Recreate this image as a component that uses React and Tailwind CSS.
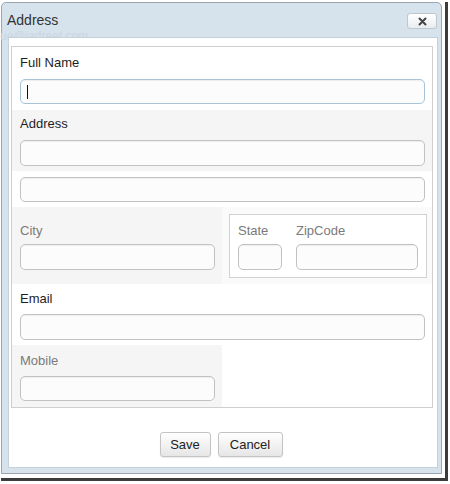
import React from 'react';

const font = { fontFamily: '"Liberation Sans", Arial, sans-serif' };

function Field({ className = '', focused = false }) {
  return (
    <div
      className={`rounded-[5px] border bg-[#fcfcfc] shadow-[inset_0_1px_1px_rgba(0,0,0,0.06)] ${
        focused ? 'border-[#a6c4d8]' : 'border-[#c2c2c2]'
      } flex items-center ${className}`}
    >
      {focused && <span className="ml-[6px] block h-[14px] w-px bg-[#111]" />}
    </div>
  );
}

function Label({ children, muted = false, className = '' }) {
  return (
    <div className={`h-[16px] text-[13px] leading-[16px] ${muted ? 'text-[#7a7a7a]' : 'text-[#1e1e1e]'} ${className}`}>
      {children}
    </div>
  );
}

function Btn({ children, className = '' }) {
  return (
    <button className={`h-[25px] rounded-[3px] border border-[#c4c4c4] bg-gradient-to-b from-white to-[#e6e6e6] text-[13px] text-[#222] shadow-[0_1px_1px_rgba(0,0,0,0.08)] ${className}`}>
      {children}
    </button>
  );
}

export default function App() {
  return (
    <div className="w-[450px] h-[484px] bg-white pt-[2px] pl-[1px]" style={font}>
      {/* drop shadow wrapper */}
      <div className="w-[447px] pr-[3px] pb-[4px] border-r-[3px] border-b-[3px] border-[#3c3c3c]">
        <div className="relative w-[441px] h-[472px] rounded-t-[5px] border border-[#9ba6b0] bg-[#d6e2ec] flex flex-col">
          {/* Title bar */}
          <div className="h-[34px] flex items-start justify-between pl-[5px] pr-[4px]">
            <span className="mt-[10px] text-[14px] leading-[14px] text-[#333]">Address</span>
            <button className="mt-[10px] w-[30px] h-[16px] rounded-[3px] border border-[#bfc6cc] bg-gradient-to-b from-white to-[#e9edf0] flex items-center justify-center">
              <svg width="9" height="9" viewBox="0 0 9 9">
                <path d="M1.5 1.5 L7.5 7.5 M7.5 1.5 L1.5 7.5" stroke="#444" strokeWidth="2" strokeLinecap="round" />
              </svg>
            </button>
          </div>
          <span className="absolute left-[-2px] top-[29px] text-[12px] leading-[8px] text-[#cad7e2] pointer-events-none">
            ue@iadreet.com
          </span>

          {/* Content */}
          <div className="relative ml-[6px] mr-[3px] h-[431px] border border-[#c3d1dd] bg-white pl-[2px] pt-[8px]">
            <div className="w-[422px] border border-[#cfcfcf] flex flex-col">
              {/* Full name */}
              <div className="h-[63px] px-[8px] pt-[8px]">
                <Label>Full Name</Label>
                <Field focused className="mt-[8px] h-[25px] w-[405px]" />
              </div>
              {/* Address */}
              <div className="h-[61px] bg-[#f5f5f5] px-[8px] pt-[6px]">
                <Label>Address</Label>
                <Field className="mt-[8px] h-[26px] w-[405px]" />
              </div>
              <div className="h-[36px] px-[8px] pt-[6px]">
                <Field className="h-[25px] w-[405px]" />
              </div>
              {/* City / State / Zip */}
              <div className="h-[77px] flex">
                <div className="w-[210px] bg-[#f5f5f5] px-[8px] pt-[16px]">
                  <Label muted>City</Label>
                  <Field className="mt-[5px] h-[26px] w-[195px]" />
                </div>
                <div className="flex-1 bg-[#fafafa] pl-[7px] pr-[5px] pt-[7px]">
                  <div className="h-[64px] border border-[#d2d2d2] bg-white flex gap-[14px] pl-[8px] pt-[8px]">
                    <div>
                      <Label muted>State</Label>
                      <Field className="mt-[5px] h-[26px] w-[44px]" />
                    </div>
                    <div>
                      <Label muted>ZipCode</Label>
                      <Field className="mt-[5px] h-[26px] w-[122px]" />
                    </div>
                  </div>
                </div>
              </div>
              {/* Email */}
              <div className="h-[61px] px-[8px] pt-[7px]">
                <Label>Email</Label>
                <Field className="mt-[7px] h-[26px] w-[405px]" />
              </div>
              {/* Mobile */}
              <div className="h-[62px] flex">
                <div className="w-[210px] bg-[#f5f5f5] px-[8px] pt-[8px]">
                  <Label muted>Mobile</Label>
                  <Field className="mt-[7px] h-[25px] w-[195px]" />
                </div>
              </div>
            </div>

            {/* Buttons */}
            <div className="mt-[24px] flex justify-center gap-[7px] pr-[6px]">
              <Btn className="w-[51px]">Save</Btn>
              <Btn className="w-[65px]">Cancel</Btn>
            </div>
          </div>
        </div>
      </div>
    </div>
  );
}
